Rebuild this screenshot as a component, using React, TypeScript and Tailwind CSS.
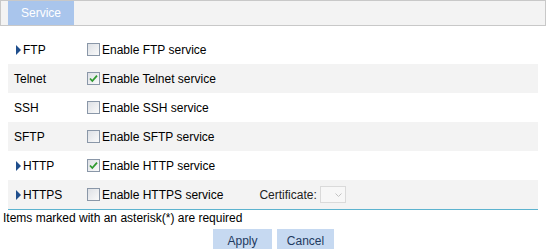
import React from 'react';

type Row = { name: string; arrow: boolean; checked: boolean; gray: boolean; cert?: boolean };

const rows: Row[] = [
    { name: 'FTP', arrow: true, checked: false, gray: false },
    { name: 'Telnet', arrow: false, checked: true, gray: true },
    { name: 'SSH', arrow: false, checked: false, gray: false },
    { name: 'SFTP', arrow: false, checked: false, gray: true },
    { name: 'HTTP', arrow: true, checked: true, gray: false },
    { name: 'HTTPS', arrow: true, checked: false, gray: true, cert: true },
];

function CheckBox({ checked }: { checked: boolean }) {
    return (
        <svg width="13" height="13" viewBox="0 0 13 13" className="shrink-0">
            <defs>
                <linearGradient id="cbg" x1="0" y1="0" x2="1" y2="1">
                    <stop offset="0" stopColor="#dcdfe4" />
                    <stop offset="1" stopColor="#fbfbfb" />
                </linearGradient>
            </defs>
            <rect x="0.5" y="0.5" width="12" height="12" fill="url(#cbg)" stroke="#8a97a8" />
            {checked && <path d="M3 6.5 L5.3 9 L10 3.6" fill="none" stroke="#2f9a2f" strokeWidth="1.8" />}
        </svg>
    );
}

function Arrow() {
    return (
        <svg width="5" height="10" viewBox="0 0 5 10" className="shrink-0">
            <path d="M0 0 L5 5 L0 10 Z" fill="#1f4e8c" />
        </svg>
    );
}

export default function App() {
    return (
        <div className="w-[547px] h-[249px] bg-white overflow-hidden text-[12px] text-black" style={{ fontFamily: '"Liberation Sans", Arial, sans-serif' }}>
            {/* Tab bar */}
            <div className="h-[26px] mr-[1px] border border-[#c8c8c8] bg-[#f3f3f3] flex">
                <div className="ml-[7px] w-[66px] h-full bg-[#a9c5ec] text-white flex items-center justify-center">Service</div>
            </div>

            {/* Rows */}
            <div className="mt-[9px] ml-[8px] w-[530px] border-b border-[#5cb3cf]">
                {rows.map((r) => (
                    <div key={r.name} className={`h-[29px] flex items-center ${r.gray ? 'bg-[#f3f3f3]' : 'bg-white'}`}>
                        <div className="w-[79px] flex items-center">
                            {r.arrow ? (
                                <div className="pl-[8px] flex items-center gap-[2px]">
                                    <Arrow />
                                    <span>{r.name}</span>
                                </div>
                            ) : (
                                <span className="pl-[6px]">{r.name}</span>
                            )}
                        </div>
                        <CheckBox checked={r.checked} />
                        <span className="ml-[2px]">Enable {r.name} service</span>
                        {r.cert && (
                            <div className="ml-[36px] flex items-center gap-[3px] text-[#222]">
                                <span>Certificate:</span>
                                <div className="w-[26px] h-[17px] border border-[#dadada] bg-[#f7f7f7] flex items-center justify-end pr-[3px]">
                                    <svg width="7" height="4" viewBox="0 0 7 4">
                                        <path d="M0.5 0.5 L3.5 3.5 L6.5 0.5" fill="none" stroke="#c2c2c2" />
                                    </svg>
                                </div>
                            </div>
                        )}
                    </div>
                ))}
            </div>

            <div className="pl-[3px] mt-[1px] leading-[14px]">Items marked with an asterisk(*) are required</div>

            <div className="mt-[4px] flex justify-center gap-[5px]">
                <button className="w-[59px] h-[24px] bg-[#c6d9f1] text-[#1f3a60] text-[12px]">Apply</button>
                <button className="w-[57px] h-[24px] bg-[#c6d9f1] text-[#1f3a60] text-[12px]">Cancel</button>
            </div>
        </div>
    );
}
